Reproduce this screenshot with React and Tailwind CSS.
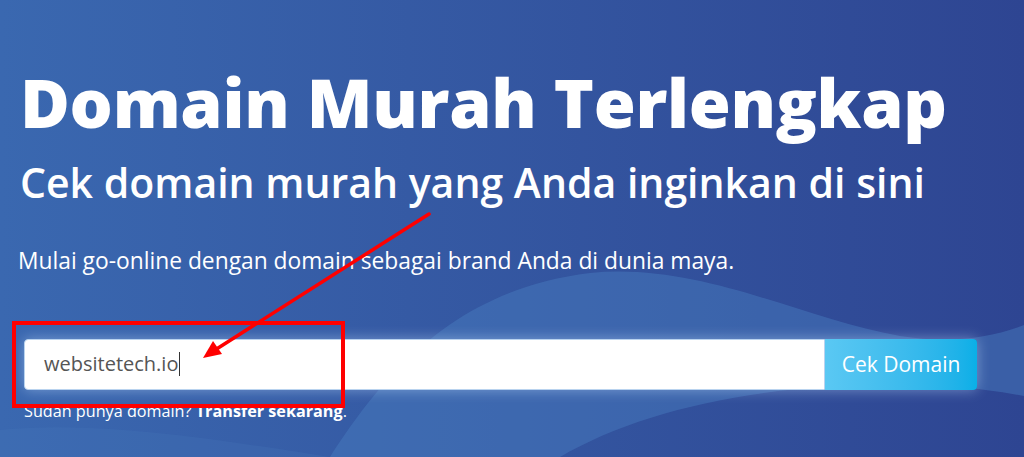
import React from 'react';

const font = { fontFamily: '"Open Sans", "Noto Sans", sans-serif' };

const Waves = () => (
  <svg className="absolute inset-0" width="1024" height="457" viewBox="0 0 1024 457">
    <path
      d="M330 457 C380 380 450 290 590 273 C700 262 800 318 900 336 C950 344 990 338 1024 325 L1024 396 C980 388 940 384 900 384 C760 384 640 410 560 457 Z"
      fill="#4a7ec0"
      fillOpacity="0.45"
    />
    <path
      d="M0 430 C100 420 220 440 330 457 L0 457 Z"
      fill="#4a7ec0"
      fillOpacity="0.2"
    />
  </svg>
);

export default function App() {
  return (
    <div
      className="relative w-[1024px] h-[457px] overflow-hidden bg-gradient-to-r from-[#3a68b0] to-[#2e4592]"
      style={font}
    >
      <Waves />

      <div className="relative flex flex-col pl-5 pt-[68px] text-white">
        <h1 className="text-[68px] font-extrabold leading-none tracking-[-0.3px]">Domain Murah Terlengkap</h1>
        <h2 className="mt-[26px] text-[41px] font-semibold leading-none">
          Cek domain murah yang Anda inginkan di sini
        </h2>
        <p className="mt-[47px] -ml-[2px] text-[22.8px] leading-none">
          Mulai go-online dengan domain sebagai brand Anda di dunia maya.
        </p>

        <div className="mt-[66px] ml-[4px] flex w-[953px] h-[51px] shadow-[0_0_14px_rgba(200,225,255,0.45)] rounded">
          <div className="flex-1 flex items-center bg-white rounded-l pl-[19px] border border-[#b9d3ef]">
            <span className="text-[20px] text-[#555555]">websitetech.io</span>
            <span className="ml-[1px] w-px h-[24px] bg-[#333333]" />
          </div>
          <button className="w-[152px] h-full rounded-r bg-gradient-to-r from-[#5ac8f3] to-[#09afe7] text-white text-[21px]">
            Cek Domain
          </button>
        </div>

        <p className="mt-[13px] ml-[4px] text-[16.2px] leading-none text-white">
          Sudah punya domain? <span className="font-bold">Transfer sekarang</span>.
        </p>
      </div>

      {/* annotation: red box */}
      <div className="absolute left-[12px] top-[321px] w-[333px] h-[87px] border-[4px] border-[#ff0000]" />

      {/* annotation: arrow */}
      <svg className="absolute inset-0 pointer-events-none" width="1024" height="457" viewBox="0 0 1024 457">
        <line x1="429" y1="214" x2="215" y2="350" stroke="#ff0000" strokeWidth="3.5" strokeLinecap="round" />
        <polygon points="203,358 213,341 222,354" fill="#ff0000" />
      </svg>
    </div>
  );
}
